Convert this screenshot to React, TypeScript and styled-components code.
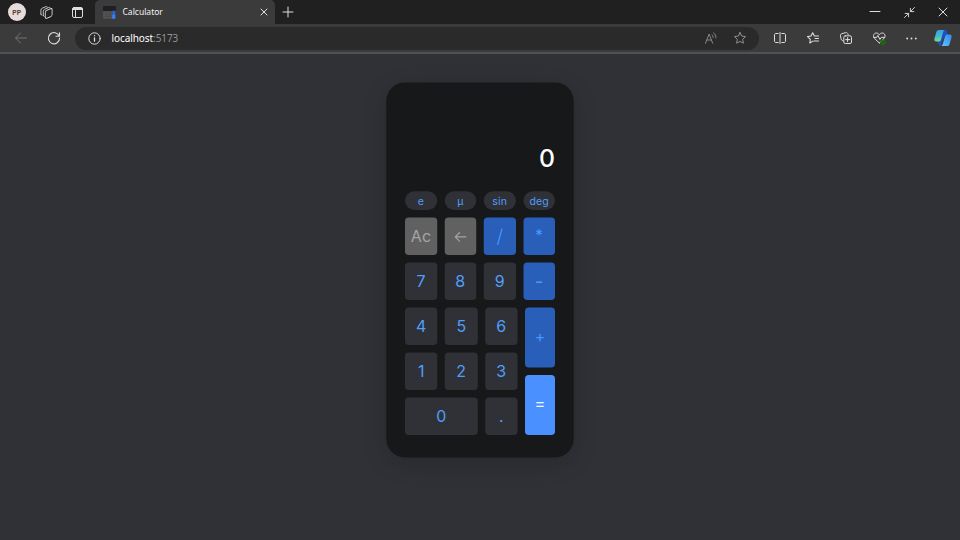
import React from "react";
import styled, { createGlobalStyle, css } from "styled-components";

const Global = createGlobalStyle`
  * { box-sizing: border-box; }
  body { margin: 0; background: #303136; overflow: hidden; }
`;

const Window = styled.div`
  width: 960px;
  height: 540px;
  display: flex;
  flex-direction: column;
  overflow: hidden;
  background: #303136;
  font-family: "Noto Sans", "Open Sans", sans-serif;
`;

const TitleBar = styled.header`
  height: 24px;
  flex: none;
  display: flex;
  align-items: center;
  background: #202020;
`;

const Avatar = styled.div`
  width: 18px;
  height: 18px;
  margin-left: 7.5px;
  border-radius: 50%;
  background: #e6dcd9;
  color: #5a3a36;
  font-size: 7.5px;
  font-weight: 600;
  line-height: 18px;
  text-align: center;
`;

const Icon = styled.svg<{ $size?: number; $left?: number; $color?: string; $weight?: number }>`
  width: ${(p) => p.$size ?? 14}px;
  height: ${(p) => p.$size ?? 14}px;
  margin-left: ${(p) => p.$left ?? 0}px;
  flex: none;
  display: block;
  overflow: visible;
  fill: none;
  stroke: ${(p) => p.$color ?? "#dedede"};
  stroke-width: ${(p) => p.$weight ?? 1};
  stroke-linecap: round;
  stroke-linejoin: round;
`;

const Tab = styled.div`
  width: 180px;
  height: 24px;
  margin-left: 12px;
  padding: 0 8px 0 8.5px;
  display: flex;
  align-items: center;
  border-radius: 5px 5px 0 0;
  background: #3b3b3b;
`;

const TabTitle = styled.span`
  flex: 1;
  margin-left: 6.5px;
  color: #f2f2f2;
  font-size: 8.5px;
  line-height: 24px;
`;

const Spacer = styled.div`
  flex: 1;
`;

const Toolbar = styled.div`
  height: 30px;
  flex: none;
  display: flex;
  align-items: center;
  background: #3b3b3b;
  border-bottom: 2px solid #525254;
`;

const AddressBar = styled.div`
  width: 684px;
  height: 23px;
  margin-left: 15px;
  padding-left: 12px;
  display: flex;
  align-items: center;
  border-radius: 12px;
  background: #2a2a2a;
`;

const Address = styled.span`
  margin-left: 10.5px;
  color: #fff;
  font-size: 10px;
  line-height: 22px;
  letter-spacing: -0.08px;
`;

const Port = styled.span`
  color: #929292;
`;

const Page = styled.main`
  flex: 1;
  min-height: 0;
  display: flex;
  justify-content: center;
  align-items: flex-start;
  padding-top: 28px;
  background: #303136;
`;

const Calculator = styled.section`
  width: 250px;
  height: 500px;
  flex: none;
  padding: 75px 25px 30px;
  border-radius: 25px;
  background: #17181a;
  box-shadow: 0 8px 32px rgba(0, 0, 0, 0.16);
  font-family: Inter, "Liberation Sans", sans-serif;
  display: flex;
  flex-direction: column;
  transform: translate(0, 0.4px) scale(0.75);
  transform-origin: top center;
`;

const Display = styled.output`
  height: 70px;
  flex: none;
  color: #fff;
  font-size: 33px;
  font-weight: 500;
  line-height: 52px;
  text-align: right;
`;

const Keypad = styled.div`
  display: flex;
  flex-direction: column;
  gap: 10px;
`;

const Row = styled.div`
  display: grid;
  grid-template-columns: repeat(4, 1fr);
  gap: 10px;
`;

const Lower = styled.div`
  display: grid;
  grid-template-columns: 1fr 40px;
  gap: 10px;
`;

const Digits = styled.div`
  display: grid;
  grid-template-columns: repeat(3, 1fr);
  grid-auto-rows: 50px;
  gap: 10px;
`;

const Operators = styled.div`
  display: grid;
  grid-template-rows: 80px 80px;
  gap: 10px;
`;

type Tone = "digit" | "grey" | "operator" | "equals";

const tones = {
  digit: css`
    padding-top: 2px;
    background: #303136;
    color: #4f9ffa;
  `,
  grey: css`
    padding-top: 2px;
    background: #616161;
    color: #a5a5a5;
  `,
  operator: css`
    background: #295eb9;
    color: #429aff;
  `,
  equals: css`
    background: #4a91ff;
    color: #f0f7ff;
  `,
};

const Key = styled.button<{ $tone?: Tone; $wide?: boolean }>`
  min-width: 0;
  min-height: 50px;
  padding: 0;
  border: 0;
  border-radius: 5px;
  display: flex;
  align-items: center;
  justify-content: center;
  font: 400 21.3px/1 Inter, "Liberation Sans", sans-serif;
  ${(p) => tones[p.$tone ?? "digit"]}
  ${(p) => p.$wide && "grid-column: span 2;"}
`;

const FunctionKey = styled(Key)`
  height: 25px;
  min-height: 0;
  padding-top: 0;
  border-radius: 12.5px;
  font-size: 14px;
  letter-spacing: 0.15px;
`;

const Symbol = styled.span<{ $size: number; $lift?: number; $weight?: number }>`
  font-size: ${(p) => p.$size}px;
  font-weight: ${(p) => p.$weight ?? 400};
  line-height: 1;
  padding-bottom: ${(p) => p.$lift ?? 0}px;
`;

const functions = ["e", "µ", "sin", "deg"];
const digits = ["4", "5", "6", "1", "2", "3", "0", "."];

function Favicon() {
  return (
    <Icon $size={13} viewBox="0 0 13 13">
      <g stroke="none">
        <rect width="13" height="5" rx="1" fill="#1e1f21" />
        <rect y="5.2" width="9.3" height="7.5" rx="1" fill="#55565a" />
        <path d="M0 7.8h9M3 5v7.5M6.2 5v7.5M0 10.3h9" stroke="#404043" strokeWidth=".5" />
        <path d="M9.3 4.8h3v7a1 1 0 0 1-1 1h-2z" fill="#2864d2" />
        <path d="M9.3 8.7h3v3.1a1 1 0 0 1-1 1h-2z" fill="#3c80ee" />
      </g>
    </Icon>
  );
}

function CopilotLogo() {
  return (
    <Icon $size={18} $left={16.5} viewBox="0 0 18 18">
      <defs>
        <linearGradient id="cool" x1="0.3" y1="0" x2=".4" y2="1">
          <stop offset="0" stopColor="#3a9ff0" />
          <stop offset=".5" stopColor="#43b8cb" />
          <stop offset="1" stopColor="#78df88" />
        </linearGradient>
        <linearGradient id="bright" x1="1" y1="0" x2="0" y2="1">
          <stop offset="0" stopColor="#2f86ee" />
          <stop offset="1" stopColor="#63c6ff" />
        </linearGradient>
      </defs>
      <g stroke="none">
        <path d="M8 1h3c1.2 0 1.8.7 2 1.8l.8 3-3 1-3 6-1.3 4.2c-1.2 0-1.8-.8-2.2-2L3.7 12.4 7 9z" fill="#1c4fc4" />
        <path d="M4.9 1h6c-1 .1-1.4.9-1.7 1.9L7 10.5c-.4 1.5-1.1 2.1-2.4 2.1H2.4c-1.8 0-2.4-1.2-1.9-3l1.8-6.3C2.8 1.7 3.6 1 4.9 1z" fill="url(#cool)" />
        <path d="M13.1 17h-6c1-.1 1.4-.9 1.7-1.9L11 7.5c.4-1.5 1.1-2.1 2.4-2.1h2.2c1.8 0 2.4 1.2 1.9 3l-1.8 6.3c-.5 1.6-1.3 2.3-2.6 2.3z" fill="url(#bright)" />
      </g>
    </Icon>
  );
}

export default function App() {
  return (
    <>
      <Global />
      <Window>
        <TitleBar>
          <Avatar>PP</Avatar>
          <Icon $size={13} $left={14.5} viewBox="0 0 13 13" $weight={0.85}>
            <rect x="5.3" y="3.6" width="6.8" height="8" rx="1.6" transform="skewY(-22) translate(0 3.4)" />
            <path d="M3.3 9.6V5.3c0-1 .4-1.6 1.3-2l4-1.8c.6-.3 1.2-.1 1.7.4M.9 8.3V4.2c0-1 .4-1.6 1.3-2L5.8.7c.6-.2 1.1-.1 1.5.3M.9 8.3l.9.7M3.3 9.6l1 .8" />
          </Icon>
          <Icon $size={11} $left={18.5} viewBox="0 0 11 11">
            <rect x=".5" y=".5" width="10" height="10" rx="1.5" />
            <path d="M1.2 2h8.6" strokeWidth="1.8" />
            <path d="M3.5 3.5v7" />
          </Icon>
          <Tab>
            <Favicon />
            <TabTitle>Calculator</TabTitle>
            <Icon $size={6} viewBox="0 0 6 6">
              <path d="m0 0 6 6M6 0 0 6" />
            </Icon>
          </Tab>
          <Icon $size={10} $left={8.5} viewBox="0 0 10 10">
            <path d="M5 0v10M0 5h10" />
          </Icon>
          <Spacer />
          <Icon $size={10} viewBox="0 0 10 10">
            <path d="M0 4.5h10" />
          </Icon>
          <Icon $size={11} $left={23.5} viewBox="0 0 12 12">
            <path d="M11.5.5 7 5M7 1.5V5h3.7M.5 11.5 5 7M1.2 7H5v3.7" />
          </Icon>
          <Icon $size={8} $left={24} viewBox="0 0 8 8">
            <path d="m0 0 8 8M8 0 0 8" />
          </Icon>
          <Icon $size={13.5} viewBox="0 0 13 13" />
        </TitleBar>

        <Toolbar>
          <Icon $size={12} $left={15} viewBox="0 0 12 12" $color="#747474">
            <path d="M11.5 6H.7M5.5 1 .6 6l4.9 5" />
          </Icon>
          <Icon $size={12} $left={21} viewBox="0 0 12 12" $weight={1.1}>
            <path d="M11.2 4.1A5.6 5.6 0 1 0 11.6 6M11.5.7v3.5H8" />
          </Icon>
          <AddressBar>
            <Icon $size={13} $left={1} viewBox="0 0 13 13">
              <circle cx="6.5" cy="6.5" r="5.7" />
              <path d="M6.5 5.8v3.4M6.5 3.7v.1" strokeWidth="1.3" />
            </Icon>
            <Address>
              localhost<Port>:5173</Port>
            </Address>
            <Spacer />
            <Icon $size={12} viewBox="0 0 12 12" $color="#8f8f8f" $weight={0.9}>
              <path d="M.5 11.3 4.1 2l3.6 9.3M1.8 8h4.6M7 2.7c.9.7 1.2 1.5 1 2.7M8.6.9c1.8 1.2 2.6 3 2.2 5" />
            </Icon>
            <Icon $size={12} $left={17.5} viewBox="0 0 12 12" $color="#8f8f8f">
              <path d="m6 .5 1.7 3.5 3.8.6-2.8 2.7.7 3.9L6 9.4l-3.4 1.8.7-3.9L.5 4.6 4.3 4z" />
            </Icon>
            <Icon $size={13} viewBox="0 0 12 12" />
          </AddressBar>
          <Icon $size={12} $left={14.5} viewBox="0 0 12 12">
            <path d="M4.2 1.5H2C1 1.5.5 2 .5 3v6c0 1 .5 1.5 1.5 1.5h2.2M7.8 1.5H10c1 0 1.5.5 1.5 1.5v6c0 1-.5 1.5-1.5 1.5H7.8M6 .5v11" />
          </Icon>
          <Icon $size={12} $left={21.5} viewBox="0 0 12 12" $weight={1.1}>
            <path d="M5.9 9.1 2.8 11l.5-3.7L.5 4.6 4 4 5.7.7 7.4 4h4.1M8 6.5h3.5M7 9h4.5" />
          </Icon>
          <Icon $size={12} $left={20.5} viewBox="0 0 12 12">
            <path d="M2.8 8.7C1.5 8.5 1.3 7.7 1 6.5L.5 4C.3 2.8.7 2 2 1.6L5.5.7c1.3-.3 2.1.1 2.7 1.8" />
            <rect x="3.8" y="3.8" width="7.7" height="7.7" rx="1.5" />
            <path d="M7.6 5.6v4.1M5.6 7.6h4.1" />
          </Icon>
          <Icon $size={13} $left={21} viewBox="0 0 13 13">
            <path d="M6.3 11 1.6 6.5C-.6 4 .9 1 3.3 1c1.3 0 2.3.7 3 1.8C7 1.7 8 1 9.2 1c2.6 0 3.9 3.1 1.8 5.5L6.3 11M.7 5.4h3l1.2-2 2 4 1.4-2h3.2" />
            <circle cx="10" cy="10.2" r="2.3" fill="#236b12" stroke="#236b12" />
            <path d="m8.9 10.2.8.8 1.5-1.6" stroke="#174a0c" strokeWidth=".8" />
          </Icon>
          <Icon $size={11} $left={20.5} viewBox="0 0 11 11" $weight={1.9}>
            <path d="M1.2 5.5h.01M5.5 5.5h.01M9.8 5.5h.01" />
          </Icon>
          <CopilotLogo />
        </Toolbar>

        <Page>
          <Calculator>
            <Display>0</Display>
            <Keypad>
              <Row>
                {functions.map((label) => (
                  <FunctionKey key={label}>{label}</FunctionKey>
                ))}
              </Row>
              <Row>
                <Key $tone="grey">Ac</Key>
                <Key $tone="grey">
                  <Icon $size={16} viewBox="0 0 12 12" $color="#a5a5a5" $weight={1.2}>
                    <path d="M11.3 6H.8M5 1.8.7 6 5 10.2" />
                  </Icon>
                </Key>
                <Key $tone="operator">
                  <Symbol $size={25.3} $weight={300} $lift={1}>/</Symbol>
                </Key>
                <Key $tone="operator">*</Key>
              </Row>
              <Row>
                <Key>7</Key>
                <Key>8</Key>
                <Key>9</Key>
                <Key $tone="operator">
                  <Symbol $size={25}>-</Symbol>
                </Key>
              </Row>
              <Lower>
                <Digits>
                  {digits.map((digit) => (
                    <Key key={digit} $wide={digit === "0"}>
                      {digit}
                    </Key>
                  ))}
                </Digits>
                <Operators>
                  <Key $tone="operator">
                    <Symbol $size={21} $lift={3}>+</Symbol>
                  </Key>
                  <Key $tone="equals">
                    <Symbol $size={22} $weight={400} $lift={4}>=</Symbol>
                  </Key>
                </Operators>
              </Lower>
            </Keypad>
          </Calculator>
        </Page>
      </Window>
    </>
  );
}
